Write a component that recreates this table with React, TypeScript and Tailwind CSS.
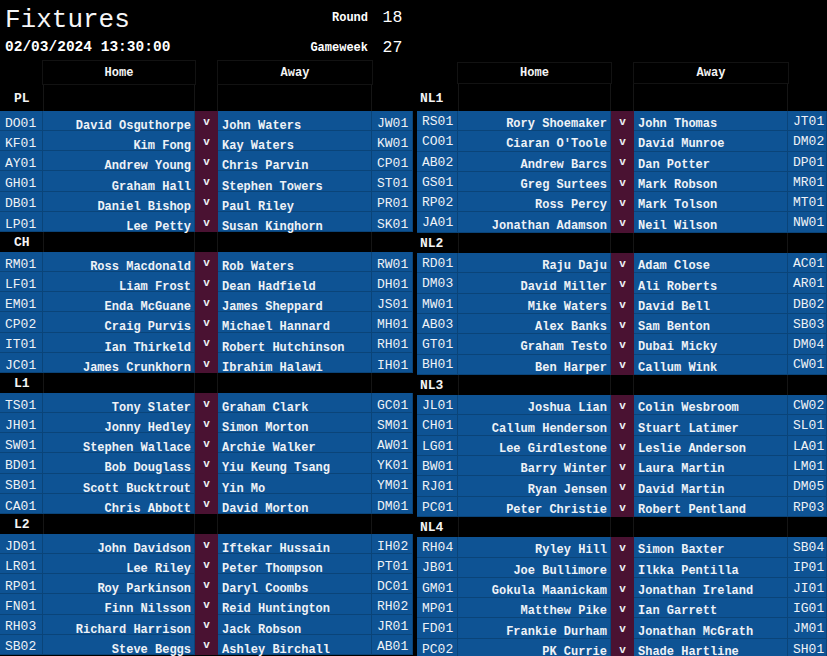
import React from 'react'

type Fixture = [string, string, string, string]
type Section = { name: string; rows: Fixture[] }

const left: Section[] = [
  {
    name: 'PL',
    rows: [
      ['DO01', 'David Osguthorpe', 'John Waters', 'JW01'],
      ['KF01', 'Kim Fong', 'Kay Waters', 'KW01'],
      ['AY01', 'Andrew Young', 'Chris Parvin', 'CP01'],
      ['GH01', 'Graham Hall', 'Stephen Towers', 'ST01'],
      ['DB01', 'Daniel Bishop', 'Paul Riley', 'PR01'],
      ['LP01', 'Lee Petty', 'Susan Kinghorn', 'SK01'],
    ],
  },
  {
    name: 'CH',
    rows: [
      ['RM01', 'Ross Macdonald', 'Rob Waters', 'RW01'],
      ['LF01', 'Liam Frost', 'Dean Hadfield', 'DH01'],
      ['EM01', 'Enda McGuane', 'James Sheppard', 'JS01'],
      ['CP02', 'Craig Purvis', 'Michael Hannard', 'MH01'],
      ['IT01', 'Ian Thirkeld', 'Robert Hutchinson', 'RH01'],
      ['JC01', 'James Crunkhorn', 'Ibrahim Halawi', 'IH01'],
    ],
  },
  {
    name: 'L1',
    rows: [
      ['TS01', 'Tony Slater', 'Graham Clark', 'GC01'],
      ['JH01', 'Jonny Hedley', 'Simon Morton', 'SM01'],
      ['SW01', 'Stephen Wallace', 'Archie Walker', 'AW01'],
      ['BD01', 'Bob Douglass', 'Yiu Keung Tsang', 'YK01'],
      ['SB01', 'Scott Bucktrout', 'Yin Mo', 'YM01'],
      ['CA01', 'Chris Abbott', 'David Morton', 'DM01'],
    ],
  },
  {
    name: 'L2',
    rows: [
      ['JD01', 'John Davidson', 'Iftekar Hussain', 'IH02'],
      ['LR01', 'Lee Riley', 'Peter Thompson', 'PT01'],
      ['RP01', 'Roy Parkinson', 'Daryl Coombs', 'DC01'],
      ['FN01', 'Finn Nilsson', 'Reid Huntington', 'RH02'],
      ['RH03', 'Richard Harrison', 'Jack Robson', 'JR01'],
      ['SB02', 'Steve Beggs', 'Ashley Birchall', 'AB01'],
    ],
  },
]

const right: Section[] = [
  {
    name: 'NL1',
    rows: [
      ['RS01', 'Rory Shoemaker', 'John Thomas', 'JT01'],
      ['CO01', "Ciaran O'Toole", 'David Munroe', 'DM02'],
      ['AB02', 'Andrew Barcs', 'Dan Potter', 'DP01'],
      ['GS01', 'Greg Surtees', 'Mark Robson', 'MR01'],
      ['RP02', 'Ross Percy', 'Mark Tolson', 'MT01'],
      ['JA01', 'Jonathan Adamson', 'Neil Wilson', 'NW01'],
    ],
  },
  {
    name: 'NL2',
    rows: [
      ['RD01', 'Raju Daju', 'Adam Close', 'AC01'],
      ['DM03', 'David Miller', 'Ali Roberts', 'AR01'],
      ['MW01', 'Mike Waters', 'David Bell', 'DB02'],
      ['AB03', 'Alex Banks', 'Sam Benton', 'SB03'],
      ['GT01', 'Graham Testo', 'Dubai Micky', 'DM04'],
      ['BH01', 'Ben Harper', 'Callum Wink', 'CW01'],
    ],
  },
  {
    name: 'NL3',
    rows: [
      ['JL01', 'Joshua Lian', 'Colin Wesbroom', 'CW02'],
      ['CH01', 'Callum Henderson', 'Stuart Latimer', 'SL01'],
      ['LG01', 'Lee Girdlestone', 'Leslie Anderson', 'LA01'],
      ['BW01', 'Barry Winter', 'Laura Martin', 'LM01'],
      ['RJ01', 'Ryan Jensen', 'David Martin', 'DM05'],
      ['PC01', 'Peter Christie', 'Robert Pentland', 'RP03'],
    ],
  },
  {
    name: 'NL4',
    rows: [
      ['RH04', 'Ryley Hill', 'Simon Baxter', 'SB04'],
      ['JB01', 'Joe Bullimore', 'Ilkka Pentilla', 'IP01'],
      ['GM01', 'Gokula Maanickam', 'Jonathan Ireland', 'JI01'],
      ['MP01', 'Matthew Pike', 'Ian Garrett', 'IG01'],
      ['FD01', 'Frankie Durham', 'Jonathan McGrath', 'JM01'],
      ['PC02', 'PK Currie', 'Shade Hartline', 'SH01'],
    ],
  },
]

type Cols = {
  code: string
  home: string
  v: string
  away: string
  code2: string
  row: string
  label: string
  codePt: string
  namePt: string
}

const leftCols: Cols = {
  code: 'w-[43px]',
  home: 'w-[152px]',
  v: 'w-[23px]',
  away: 'w-[154px]',
  code2: 'w-[41px]',
  row: 'h-[20.15px]',
  label: 'pl-[14px]',
  codePt: 'pt-[6px]',
  namePt: 'pt-[11px]',
}

const rightCols: Cols = {
  code: 'w-[41px]',
  home: 'w-[153px]',
  v: 'w-[23px]',
  away: 'w-[154px]',
  code2: 'w-[39px]',
  row: 'h-[20.3px]',
  label: 'pl-[3px]',
  codePt: 'pt-[2px]',
  namePt: 'pt-[7px]',
}

function FixtureRow({ f, c }: { f: Fixture; c: Cols }) {
  const cell = 'h-full shrink-0 flex items-center border-r border-b border-[#0a4479]'
  return (
    <div className={`flex ${c.row} bg-[#0e5394] text-[#eef2f7]`}>
      <div className={`${cell} ${c.code} ${c.codePt} pl-[5px] text-[13px]`}>{f[0]}</div>
      <div className={`${cell} ${c.home} ${c.namePt} justify-end pr-[3px] text-[12px] font-bold whitespace-nowrap`}>{f[1]}</div>
      <div className={`h-full shrink-0 flex items-center justify-center ${c.v} pt-[2px] bg-[#4a1232] text-[11px] font-bold`}>v</div>
      <div className={`${cell} ${c.away} ${c.namePt} pl-[4px] text-[12px] font-bold whitespace-nowrap`}>{f[2]}</div>
      <div className={`${cell} ${c.code2} ${c.codePt} pl-[5px] text-[13px]`}>{f[3]}</div>
    </div>
  )
}

function SectionBand({ name, c, tall }: { name: string; c: Cols; tall?: string }) {
  const cell = 'h-full shrink-0 border-r border-[#151515]'
  return (
    <div className={`flex ${tall ?? c.row} bg-black text-[#f4f4f4]`}>
      <div className={`h-full shrink-0 flex items-center ${c.code} ${c.label} pt-[2px] text-[13px] font-bold`}>{name}</div>
      <div className={`${cell} ${c.home} border-l`} />
      <div className={`${cell} ${c.v}`} />
      <div className={`${cell} ${c.away}`} />
      <div className={`${c.code2}`} />
    </div>
  )
}

function Sections({ data, c, firstTall }: { data: Section[]; c: Cols; firstTall: string }) {
  return (
    <>
      {data.map((s, i) => (
        <div key={s.name}>
          <SectionBand name={s.name} c={c} tall={i === 0 ? firstTall : undefined} />
          {s.rows.map(f => (
            <FixtureRow key={f[0]} f={f} c={c} />
          ))}
        </div>
      ))}
    </>
  )
}

function HeadRow({ c }: { c: Cols }) {
  return (
    <div className="flex h-full text-[12px] font-bold text-[#f4f4f4]">
      <div className={`${c.code} shrink-0 border-r border-[#121212]`} />
      <div className={`${c.home} shrink-0 flex items-center justify-center border-y border-[#121212]`}>Home</div>
      <div className={`${c.v} shrink-0 border-x border-[#121212]`} />
      <div className={`${c.away} shrink-0 flex items-center justify-center border-y border-[#121212]`}>Away</div>
      <div className={`${c.code2} shrink-0 border-l border-[#121212]`} />
    </div>
  )
}

export default function App() {
  return (
    <div className="w-[827px] h-[656px] overflow-hidden bg-black flex items-start gap-[4px] font-['Liberation_Mono','DejaVu_Sans_Mono',monospace] text-white">
      <div className="w-[413px] shrink-0">
        <div className="flex h-[36px] items-center">
          <div className="w-[218px] shrink-0 pl-[5px] text-[26px] leading-none pt-[3px] text-[#f6f6f6]">Fixtures</div>
          <div className="w-[154px] shrink-0 text-right pr-[4px] text-[12px] font-bold">Round</div>
          <div className="w-[41px] shrink-0 text-center text-[16.5px]">18</div>
        </div>
        <div className="flex h-[24px] items-center">
          <div className="w-[218px] shrink-0 pl-[5px] text-[14.5px] font-bold whitespace-nowrap">02/03/2024 13:30:00</div>
          <div className="w-[154px] shrink-0 text-right pr-[4px] text-[12px] font-bold">Gameweek</div>
          <div className="w-[41px] shrink-0 text-center text-[16.5px]">27</div>
        </div>
        <div className="h-[25px]">
          <HeadRow c={leftCols} />
        </div>
        <Sections data={left} c={leftCols} firstTall="h-[26px]" />
      </div>
      <div className="w-[410px] shrink-0">
        <div className="h-[62px]" />
        <div className="h-[22px]">
          <HeadRow c={rightCols} />
        </div>
        <Sections data={right} c={rightCols} firstTall="h-[27px]" />
      </div>
    </div>
  )
}
